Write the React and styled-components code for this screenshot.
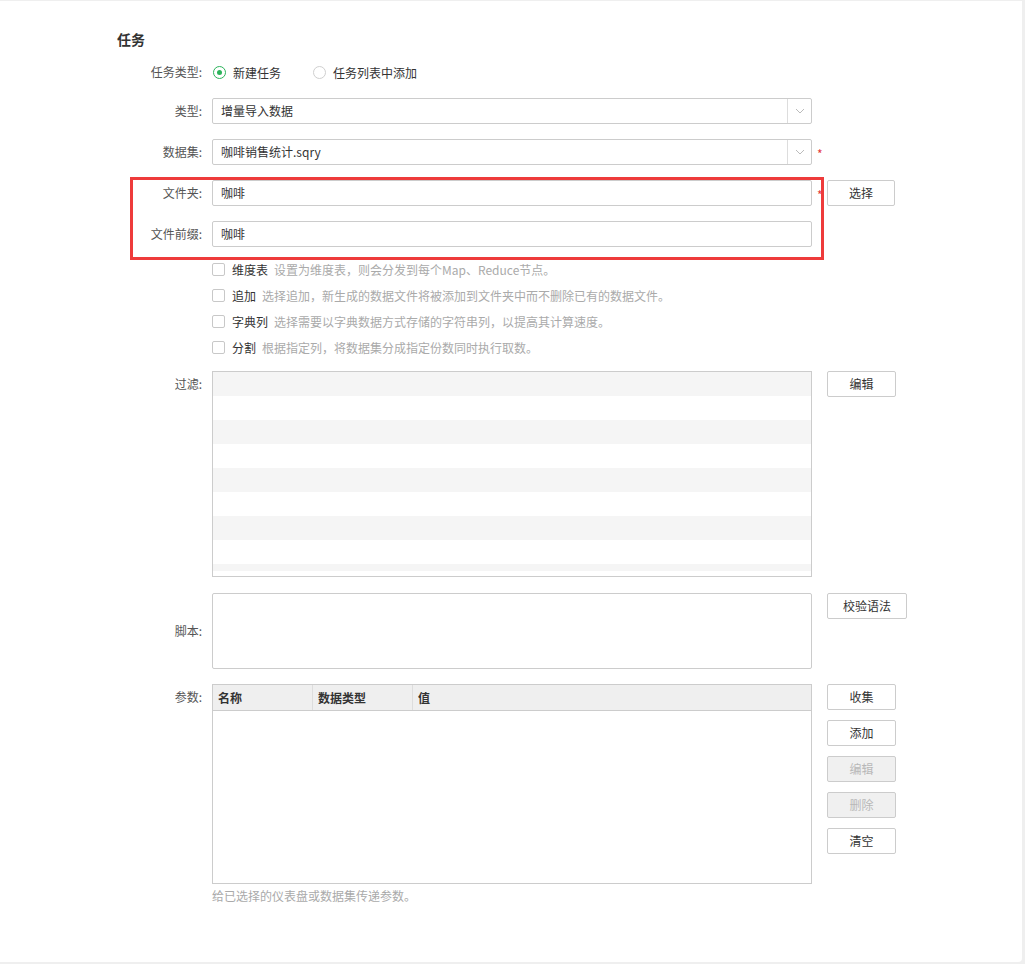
import React from 'react';
import styled, { createGlobalStyle } from 'styled-components';

const GlobalStyle = createGlobalStyle`
  body {
    margin: 0;
    background: #efefef;
    font-family: "Noto Sans CJK SC", "Noto Sans", sans-serif;
    font-size: 12px;
    color: #333;
  }
`;

const Card = styled.div`
  margin-top: 1px;
  width: 1022px;
  height: 961px;
  box-sizing: border-box;
  background: #fff;
  border-radius: 0 0 4px 0;
  padding: 28px 0 0 117px;
`;

const Title = styled.div`
  font-size: 14px;
  font-weight: bold;
  line-height: 20px;
  height: 20px;
  color: #333;
`;

const Row = styled.div`
  display: flex;
  align-items: flex-start;
  margin-top: ${p => p.$mt || 0}px;
`;

const Label = styled.div`
  width: 85px;
  height: 26px;
  padding-right: 10px;
  box-sizing: content-box;
  text-align: right;
  line-height: 26px;
  color: #555;
  flex-shrink: 0;
  align-self: ${p => (p.$middle ? 'center' : 'flex-start')};
`;

const RadioGroup = styled.div`
  display: flex;
  align-items: center;
  height: 26px;
  gap: 31px;
`;

const RadioItem = styled.label`
  display: flex;
  align-items: center;
  gap: 7px;
  color: #333;
`;

const RadioCircle = styled.span`
  width: 13px;
  height: 13px;
  box-sizing: border-box;
  border-radius: 50%;
  border: 1px solid ${p => (p.$checked ? '#2bb35a' : '#cfcfcf')};
  display: flex;
  align-items: center;
  justify-content: center;
  margin-left: 1px;
  &::after {
    content: '';
    display: ${p => (p.$checked ? 'block' : 'none')};
    width: 5px;
    height: 5px;
    border-radius: 50%;
    background: #2bb35a;
  }
`;

const Select = styled.div`
  width: 600px;
  height: 26px;
  box-sizing: border-box;
  border: 1px solid #ccc;
  border-radius: 2px;
  display: flex;
  align-items: stretch;
`;

const SelectValue = styled.div`
  flex: 1;
  padding-left: 8px;
  line-height: 24px;
  color: #333;
`;

const SelectArrow = styled.div`
  width: 23px;
  border-left: 1px solid #ddd;
  display: flex;
  align-items: center;
  justify-content: center;
`;

const Input = styled.div`
  width: 600px;
  height: 26px;
  box-sizing: border-box;
  border: 1px solid #ccc;
  border-radius: 2px;
  padding-left: 8px;
  line-height: 24px;
  color: #333;
`;

const Side = styled.div`
  width: 15px;
  height: 26px;
  flex-shrink: 0;
  line-height: 30px;
  padding-left: 5px;
  box-sizing: border-box;
  color: #e4393c;
  font-size: 12px;
  overflow: hidden;
`;

const Button = styled.button`
  display: block;
  height: 26px;
  min-width: ${p => p.$w || 69}px;
  padding: 0 15px;
  margin: 0;
  box-sizing: border-box;
  border: 1px solid #ccc;
  border-radius: 2px;
  background: ${p => (p.disabled ? '#f0f0f0' : '#fff')};
  color: ${p => (p.disabled ? '#b8b8b8' : '#333')};
  font-family: inherit;
  font-size: 12px;
  line-height: 24px;
  cursor: ${p => (p.disabled ? 'default' : 'pointer')};
`;

const ButtonColumn = styled.div`
  display: flex;
  flex-direction: column;
  gap: 10px;
`;

const Highlight = styled.div`
  position: relative;
`;

const RedBox = styled.div`
  position: absolute;
  left: 13px;
  top: -3px;
  width: 694px;
  bottom: -13px;
  box-sizing: border-box;
  border: 3px solid #ee3b3b;
  pointer-events: none;
`;

const CheckList = styled.div`
  margin-top: 9px;
`;

const CheckRow = styled.div`
  display: flex;
  align-items: center;
  height: 26px;
  padding-left: 95px;
`;

const Box = styled.span`
  width: 13px;
  height: 13px;
  box-sizing: border-box;
  border: 1px solid #c8c8c8;
  border-radius: 2px;
  margin-right: 7px;
`;

const CheckTitle = styled.span`
  color: #333;
`;

const CheckDesc = styled.span`
  color: #aaa;
  margin-left: 6px;
`;

const FilterBox = styled.div`
  width: 600px;
  height: 206px;
  box-sizing: border-box;
  border: 1px solid #ccc;
`;

const StripeList = styled.div`
  height: 199px;
  overflow: hidden;
`;

const Stripe = styled.div`
  height: 24px;
  background: ${p => (p.$odd ? '#fff' : '#f5f5f5')};
`;

const Textarea = styled.div`
  width: 600px;
  height: 76px;
  box-sizing: border-box;
  border: 1px solid #ccc;
  border-radius: 2px;
`;

const Table = styled.div`
  width: 600px;
  height: 200px;
  box-sizing: border-box;
  border: 1px solid #ccc;
`;

const TableHead = styled.div`
  display: flex;
  height: 26px;
  box-sizing: border-box;
  background: #efefef;
  border-bottom: 1px solid #ccc;
`;

const HeadCell = styled.div`
  width: ${p => (p.$last ? 'auto' : '100px')};
  flex: ${p => (p.$last ? 1 : 'none')};
  box-sizing: border-box;
  padding-left: 5px;
  border-right: ${p => (p.$last ? 'none' : '1px solid #ddd')};
  line-height: 25px;
  font-weight: bold;
  color: #333;
`;

const Help = styled.div`
  margin: 2px 0 0 95px;
  line-height: 20px;
  height: 20px;
  color: #aaa;
`;

const Chevron = () => (
  <svg width="10" height="6" viewBox="0 0 10 6">
    <path d="M1 1l4 4 4-4" fill="none" stroke="#bbb" strokeWidth="1" />
  </svg>
);

const checks = [
  ['维度表', '设置为维度表，则会分发到每个Map、Reduce节点。'],
  ['追加', '选择追加，新生成的数据文件将被添加到文件夹中而不删除已有的数据文件。'],
  ['字典列', '选择需要以字典数据方式存储的字符串列，以提高其计算速度。'],
  ['分割', '根据指定列，将数据集分成指定份数同时执行取数。'],
];

export default function App() {
  return (
    <>
      <GlobalStyle />
      <Card>
        <Title>任务</Title>

        <Row $mt={10}>
          <Label>任务类型:</Label>
          <RadioGroup>
            <RadioItem><RadioCircle $checked />新建任务</RadioItem>
            <RadioItem><RadioCircle />任务列表中添加</RadioItem>
          </RadioGroup>
        </Row>

        <Row $mt={13}>
          <Label>类型:</Label>
          <Select>
            <SelectValue>增量导入数据</SelectValue>
            <SelectArrow><Chevron /></SelectArrow>
          </Select>
        </Row>

        <Row $mt={15}>
          <Label>数据集:</Label>
          <Select>
            <SelectValue>咖啡销售统计.sqry</SelectValue>
            <SelectArrow><Chevron /></SelectArrow>
          </Select>
          <Side>*</Side>
        </Row>

        <Highlight>
          <Row $mt={15}>
            <Label>文件夹:</Label>
            <Input>咖啡</Input>
            <Side>*</Side>
            <Button $w={68}>选择</Button>
          </Row>
          <Row $mt={15}>
            <Label>文件前缀:</Label>
            <Input>咖啡</Input>
          </Row>
          <RedBox />
        </Highlight>

        <CheckList>
          {checks.map(([t, d]) => (
            <CheckRow key={t}>
              <Box />
              <CheckTitle>{t}</CheckTitle>
              <CheckDesc>{d}</CheckDesc>
            </CheckRow>
          ))}
        </CheckList>

        <Row $mt={11}>
          <Label>过滤:</Label>
          <FilterBox>
            <StripeList>
              {Array.from({ length: 9 }).map((_, i) => (
                <Stripe key={i} $odd={i % 2 === 1} />
              ))}
            </StripeList>
          </FilterBox>
          <Side />
          <Button>编辑</Button>
        </Row>

        <Row $mt={16}>
          <Label $middle>脚本:</Label>
          <Textarea />
          <Side />
          <Button $w={79}>校验语法</Button>
        </Row>

        <Row $mt={15}>
          <Label>参数:</Label>
          <Table>
            <TableHead>
              <HeadCell>名称</HeadCell>
              <HeadCell>数据类型</HeadCell>
              <HeadCell $last>值</HeadCell>
            </TableHead>
          </Table>
          <Side />
          <ButtonColumn>
            <Button>收集</Button>
            <Button>添加</Button>
            <Button disabled>编辑</Button>
            <Button disabled>删除</Button>
            <Button>清空</Button>
          </ButtonColumn>
        </Row>

        <Help>给已选择的仪表盘或数据集传递参数。</Help>
      </Card>
    </>
  );
}
